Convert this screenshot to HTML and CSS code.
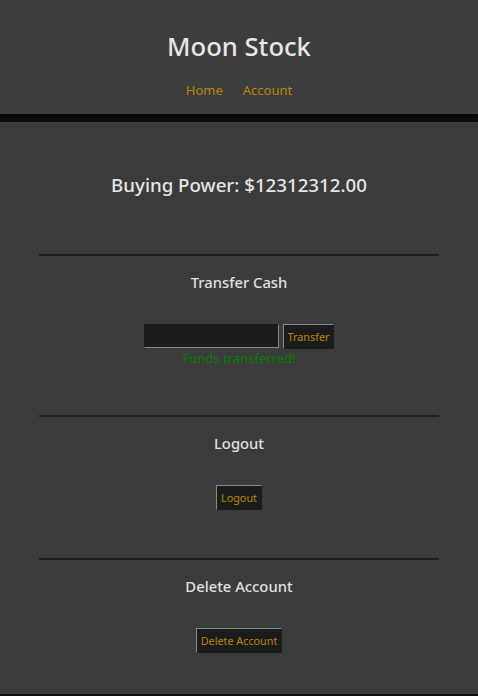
FILE: index.html
```html
<!DOCTYPE html>
<html>
<head>
<meta charset="utf-8">
<link rel="stylesheet" href="styles.css">
</head>
<body>
<header class="site-header">
  <h1 class="brand">Moon Stock</h1>
  <nav class="nav">
    <a class="nav-link" href="#">Home</a>
    <a class="nav-link" href="#">Account</a>
  </nav>
</header>
<main class="content">
  <h2 class="power">Buying Power: $12312312.00</h2>
  <section class="block">
    <h3 class="block-title">Transfer Cash</h3>
    <div class="transfer-row">
      <input class="field" type="text">
      <button class="btn">Transfer</button>
    </div>
    <p class="msg">Funds transferred!</p>
  </section>
  <section class="block">
    <h3 class="block-title">Logout</h3>
    <div class="transfer-row">
      <button class="btn">Logout</button>
    </div>
  </section>
  <section class="block">
    <h3 class="block-title">Delete Account</h3>
    <div class="transfer-row">
      <button class="btn">Delete Account</button>
    </div>
  </section>
</main>
</body>
</html>
```
FILE: styles.css
```css
html, body {
  margin: 0;
  padding: 0;
  background: #0f0f0f;
  font-family: "Noto Sans", "Open Sans", sans-serif;
}
.site-header {
  height: 114px;
  background: #3d3d3d;
  box-sizing: border-box;
  padding-top: 31px;
  text-align: center;
  box-shadow: 0 4px 6px rgba(0,0,0,0.6);
}
.brand {
  margin: 0;
  font-size: 25.6px;
  font-weight: 500;
  color: #e6e6e6;
  line-height: 32px;
}
.nav {
  margin-top: 18px;
  display: flex;
  justify-content: center;
  gap: 20px;
}
.nav-link {
  color: #b8860b;
  text-decoration: none;
  font-size: 13px;
  line-height: 18px;
}
.content {
  margin-top: 8px;
  height: 572px;
  background: #3b3b3b;
  padding-top: 50px;
  box-sizing: border-box;
  text-align: center;
  color: #e6e6e6;
}
.power {
  margin: 0;
  font-size: 18.7px;
  font-weight: 500;
  line-height: 26px;
}
.block {
  width: 400px;
  margin: 0 auto;
  border-top: 2px solid #1f1f1f;
}
.content .block:first-of-type { margin-top: 56px; }
.block + .block { margin-top: 48px; }
.block-title {
  margin: 15px 0 0;
  font-size: 14.8px;
  font-weight: 500;
  line-height: 22px;
  color: #e0e0e0;
}
.transfer-row {
  margin-top: 31px;
  display: flex;
  justify-content: center;
  gap: 4px;
}
.field {
  width: 135px;
  height: 24px;
  box-sizing: border-box;
  background: #1c1c1c;
  border: 1px solid #1c1c1c;
  border-right-color: #888;
  border-bottom-color: #888;
  margin: 0;
  padding: 0 4px;
}
.btn {
  height: 25px;
  box-sizing: border-box;
  background: #1c1c1c;
  color: #b8860b;
  border: 1px solid #888;
  border-right-color: #1c1c1c;
  border-bottom-color: #1c1c1c;
  font-family: "Noto Sans", "Open Sans", sans-serif;
  font-size: 10.8px;
  padding: 0 4px;
  margin: 0;
}
.msg {
  margin: 0;
  color: #008000;
  font-size: 13px;
  line-height: 18px;
}
```
